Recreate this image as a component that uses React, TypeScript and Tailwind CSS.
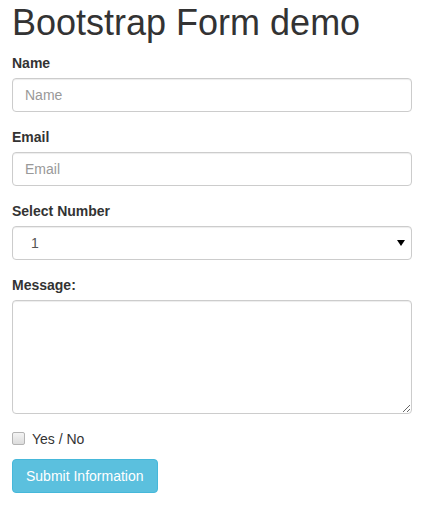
import React from 'react';

const inputClass =
  'block w-full h-[34px] px-3 py-[6px] text-sm text-[#555] bg-white border border-[#ccc] rounded-[4px] shadow-[inset_0_1px_1px_rgba(0,0,0,0.075)] placeholder:text-[#999] outline-none';

const labelClass = 'block mb-[5px] text-sm leading-5 font-bold text-[#333]';

const App: React.FC = () => {
  return (
    <div className="min-h-screen bg-white pl-3 pr-[14px] font-['Liberation_Sans',Arial,sans-serif] text-sm leading-5 text-[#333]">
      {/* Heading */}
      <h1 className="mt-[3px] mb-[10px] text-[36px] leading-[1.1] font-normal text-[#333]">
        Bootstrap Form demo
      </h1>

      <form onSubmit={(e) => e.preventDefault()}>
        <div className="mb-[15px]">
          <label className={labelClass}>Name</label>
          <input type="text" placeholder="Name" className={inputClass} />
        </div>

        <div className="mb-[15px]">
          <label className={labelClass}>Email</label>
          <input type="email" placeholder="Email" className={inputClass} />
        </div>

        <div className="mb-[15px]">
          <label className={labelClass}>Select Number</label>
          <div className="relative">
            <select className={inputClass + ' appearance-none pl-[18px]'} defaultValue="1">
              <option>1</option>
              <option>2</option>
              <option>3</option>
              <option>4</option>
              <option>5</option>
            </select>
            {/* dropdown arrow */}
            <span className="pointer-events-none absolute right-[7px] top-[14px] w-0 h-0 border-l-[4px] border-r-[4px] border-t-[6px] border-l-transparent border-r-transparent border-t-black" />
          </div>
        </div>

        <div className="mb-[15px]">
          <label className={labelClass}>Message:</label>
          <textarea
            rows={5}
            className="block w-full h-[114px] px-3 py-[6px] text-sm leading-5 text-[#555] bg-white border border-[#ccc] rounded-[4px] shadow-[inset_0_1px_1px_rgba(0,0,0,0.075)] outline-none resize-y"
          />
        </div>

        <div className="mb-[10px]">
          <label className="flex items-center h-5 text-sm font-normal text-[#333]">
            <input
              type="checkbox"
              className="appearance-none w-[13px] h-[13px] m-0 mr-[7px] border border-[#b4b4b4] rounded-[2px] bg-gradient-to-b from-[#f4f4f4] to-[#dcdcdc]"
            />
            Yes / No
          </label>
        </div>

        <button
          type="submit"
          className="inline-block h-[34px] px-[13px] py-[6px] text-sm leading-5 text-white bg-[#5bc0de] border border-[#46b8da] rounded-[4px]"
        >
          Submit Information
        </button>
      </form>
    </div>
  );
};

export default App;
